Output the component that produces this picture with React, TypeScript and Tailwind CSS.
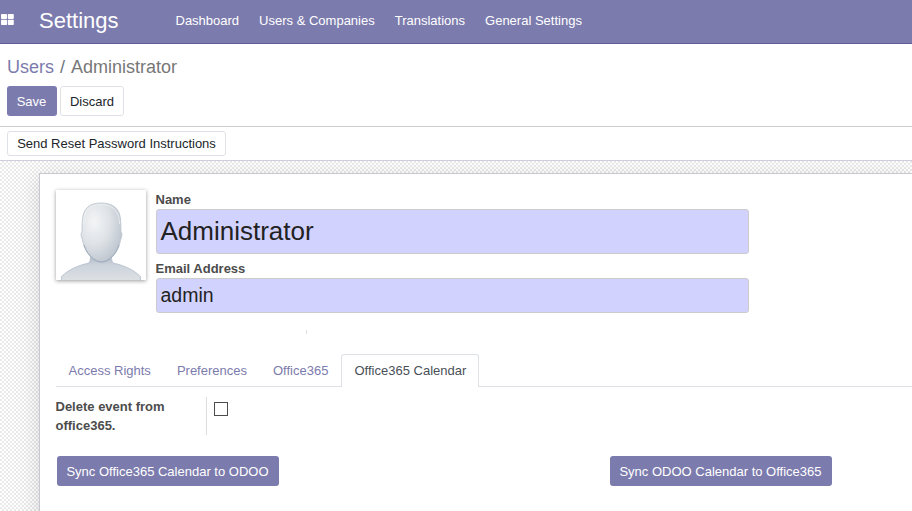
import type { ReactNode } from "react";

const menu = ["Dashboard", "Users & Companies", "Translations", "General Settings"];
const tabs = ["Access Rights", "Preferences", "Office365"];

function PrimaryButton({ children, className }: { children: ReactNode; className: string }) {
  return (
    <button className={`h-[30px] rounded-[3px] bg-[#7c7bad] pt-px pr-px text-center whitespace-nowrap text-white ${className}`}>
      {children}
    </button>
  );
}

function AppsIcon() {
  return (
    <svg width="13" height="11" viewBox="0 0 13 11" fill="#fff" className="mt-[14px] ml-[1px] shrink-0">
      <rect x="0" y="0" width="6" height="5" rx="0.8" />
      <rect x="6.800" y="0" width="6" height="5" rx="0.8" />
      <rect x="0" y="5.800" width="6" height="5.200" rx="0.8" />
      <rect x="6.800" y="5.800" width="6" height="5.200" rx="0.8" />
    </svg>
  );
}

function Avatar() {
  return (
    <svg
      width="90"
      height="90"
      viewBox="0 0 90 90"
      className="shrink-0 bg-white shadow-[0_1px_4px_rgba(0,0,0,0.4)]"
    >
      <defs>
        <radialGradient id="face" cx="0.32" cy="0.32" r="0.75">
          <stop offset="0" stopColor="#f3f4f6" />
          <stop offset="0.5" stopColor="#dfe3e7" />
          <stop offset="1" stopColor="#bcc4ce" />
        </radialGradient>
        <linearGradient id="body" x1="0" y1="0" x2="0" y2="1">
          <stop offset="0" stopColor="#a9b4c3" />
          <stop offset="0.4" stopColor="#ccd3db" />
          <stop offset="1" stopColor="#dce0e4" />
        </linearGradient>
      </defs>
      <path
        d="M5.500 90V86.500C12 80 22 75.500 31 73.500C34 72.800 34.500 71 34.500 65H55.500C55.500 71 56 72.800 59 73.500C68 75.500 78 80 84.500 86.500V90"
        fill="url(#body)"
        stroke="#b3bdca"
        strokeWidth="0.8"
      />
      <path
        d="M45 13C57 13 63.500 18.500 64.500 29C65 34 64.800 38 65 42C66.500 43 66 47 64.500 50C64 54 62.500 57 61 60C57.500 67 51.500 72 45.500 72C39.500 72 33.500 67 30 60C28.500 57 27 54 26.500 50C25 47 24.500 43 26 42C26 38 26 34 26.500 29C27.500 18.500 33 13 45 13Z"
        fill="url(#face)"
        stroke="#bac3cd"
        strokeWidth="0.8"
      />
      <path d="M28 55C31 65 39 72 45.500 72C52 72 60 65 63 55" fill="none" stroke="#96a4b8" strokeWidth="0.9" />
      <path d="M27.500 34C27.500 21 34 14.500 45 14.500C56 14.500 63.500 21 63.500 34" fill="none" stroke="#eef0f2" strokeWidth="0.8" />
    </svg>
  );
}

export default function App() {
  return (
    <div className="flex h-[511px] w-[912px] flex-col overflow-hidden bg-white font-['Liberation_Sans',Arial,sans-serif] text-[13px] leading-[19.5px] text-[#4c4c4c]">
      <header className="flex h-11 shrink-0 border-b border-[#5f5e97] bg-[#7c7bad] text-white">
        <AppsIcon />
        <h1 className="ml-[25px] w-[136.500px] text-[22px] leading-[41px]">Settings</h1>
        <nav className="flex gap-5 leading-[41px] whitespace-nowrap">
          {menu.map((item) => (
            <a key={item}>{item}</a>
          ))}
        </nav>
      </header>

      <section className="h-[83px] shrink-0 border-b border-[#cccccc] px-[7px] pt-[10px]">
        <div className="flex h-8 text-[18px] leading-[27px]">
          <span className="text-[#7c7bad]">Users</span>
          <span className="px-[6px] text-[#6c757d]">/</span>
          <span className="text-[#777777]">Administrator</span>
        </div>
        <div className="flex gap-[3px]">
          <PrimaryButton className="w-[50px]">Save</PrimaryButton>
          <button className="h-[30px] w-16 rounded-[3px] border border-[#dee2e6] pt-px text-[#212529]">Discard</button>
        </div>
      </section>

      <section className="h-[34px] shrink-0 border-b border-[#cfcfdb] px-[7px] pt-1">
        <button className="h-[25px] w-[219px] rounded-[3px] border border-[#dee2e6] leading-[23px] whitespace-nowrap text-[#212529]">
          Send Reset Password Instructions
        </button>
      </section>

      <main className="flex-1 overflow-hidden bg-[repeating-conic-gradient(#e9e9e9_0_25%,#ffffff_0_50%)] bg-[length:4px_4px] pt-3 pl-[39px]">
        <div className="h-[400px] border-t border-l border-[#c8c8d3] bg-white pt-4 pl-4 shadow-[0_5px_20px_rgba(0,0,0,0.14)]">
          <div className="flex h-[140px]">
            <Avatar />
            <div className="ml-[9.500px] w-[593px]">
              <div className="h-[19px] font-bold">Name</div>
              <div className="h-[45px] rounded-[3px] border border-[#cccccc] bg-[#d2d2ff] pl-[4px] text-[26px] leading-[43px] text-[#222222]">
                Administrator
              </div>
              <div className="mt-[5px] h-[19px] font-bold">Email Address</div>
              <div className="h-[35px] rounded-[3px] border border-[#cccccc] bg-[#d2d2ff] pl-[4px] text-[19.500px] leading-[33px] text-[#222222]">
                admin
              </div>
            </div>
          </div>
          <div className="ml-[250px] h-1 w-px bg-[#dddddd]" />

          <div className="mt-5 -ml-[0.500px] flex h-[33px] border-b border-[#dee2e6] leading-[32px] whitespace-nowrap">
            {tabs.map((tab) => (
              <a key={tab} className="px-[13px] pt-px text-[#7c7bad]">
                {tab}
              </a>
            ))}
            <a className="h-[33px] w-[138px] rounded-t-[3px] border border-b-0 border-[#dee2e6] bg-white text-center text-[#495057]">
              Office365 Calendar
            </a>
          </div>

          <div className="mt-[10px] -ml-[0.500px] flex h-[38px]">
            <div className="w-[150.500px] leading-[19px] font-bold">
              Delete event from
              <br />
              office365.
            </div>
            <div className="border-l border-[#dddddd] pt-[5px] pl-[7px]">
              <div className="size-[14px] border border-[#4c4c4c] bg-white" />
            </div>
          </div>

          <div className="mt-[21px] ml-px flex gap-[331px]">
            <PrimaryButton className="w-[222px] shrink-0">Sync Office365 Calendar to ODOO</PrimaryButton>
            <PrimaryButton className="w-[222px] shrink-0">Sync ODOO Calendar to Office365</PrimaryButton>
          </div>
        </div>
      </main>
    </div>
  );
}
